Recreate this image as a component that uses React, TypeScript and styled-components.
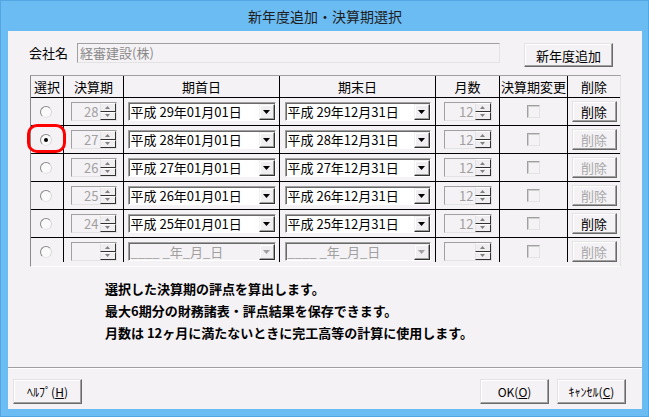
import React from 'react';
import styled, { createGlobalStyle } from 'styled-components';

const FONT = `"Noto Sans CJK JP", "Noto Sans", sans-serif`;

const GlobalStyle = createGlobalStyle`
  html, body {
    margin: 0;
    padding: 0;
  }
  body {
    font-family: ${FONT};
  }
  * {
    box-sizing: border-box;
  }
`;

interface PeriodRow {
  no: string;
  start: string;
  end: string;
  months: string;
  selected: boolean;
  deletable: boolean;
  empty?: boolean;
}

const rows: PeriodRow[] = [
  { no: '28', start: '平成 29年01月01日', end: '平成 29年12月31日', months: '12', selected: false, deletable: true },
  { no: '27', start: '平成 28年01月01日', end: '平成 28年12月31日', months: '12', selected: true, deletable: false },
  { no: '26', start: '平成 27年01月01日', end: '平成 27年12月31日', months: '12', selected: false, deletable: false },
  { no: '25', start: '平成 26年01月01日', end: '平成 26年12月31日', months: '12', selected: false, deletable: false },
  { no: '24', start: '平成 25年01月01日', end: '平成 25年12月31日', months: '12', selected: false, deletable: true },
  { no: '', start: '____ _年_月_日', end: '____ _年_月_日', months: '', selected: false, deletable: false, empty: true }
];

const headers = ['選択', '決算期', '期首日', '期末日', '月数', '決算期変更', '削除'];

// Window frame
const Window = styled.div`
  width: 649px;
  height: 417px;
  background: #6cbcf4;
  border: 1px solid #52a6e2;
  padding: 0 6px 7px 7px;
  display: flex;
  flex-direction: column;
`;

const TitleBar = styled.div`
  height: 30px;
  line-height: 30px;
  text-align: center;
  font-size: 14px;
  color: #1e1e1e;
`;

const Client = styled.div`
  flex: 1;
  background: #f5f2f5;
  display: flex;
  flex-direction: column;
`;

const CompanyRow = styled.div`
  display: flex;
  align-items: flex-start;
  padding: 12px 0 0 21px;
`;

const Label = styled.div`
  width: 48px;
  height: 20px;
  line-height: 20px;
  font-size: 13px;
  color: #000;
`;

const TextBox = styled.div`
  width: 423px;
  height: 20px;
  margin-right: 24px;
  border: 1px solid;
  border-color: #a0a0a0 #e3e3e3 #e3e3e3 #a0a0a0;
  padding-left: 2px;
  font-size: 13px;
  line-height: 18px;
  color: #8a8a8a;
`;

const RaisedButton = styled.div<{ $w: number; $h: number; $disabled?: boolean; $size?: number }>`
  width: ${p => p.$w}px;
  height: ${p => p.$h}px;
  border: 1px solid;
  border-color: #e3e3e3 #696969 #696969 #e3e3e3;
  box-shadow: inset -1px -1px 0 #a0a0a0, inset 1px 1px 0 #fff;
  background: #f5f2f5;
  display: flex;
  align-items: center;
  justify-content: center;
  font-size: ${p => p.$size ?? 13}px;
  line-height: 1;
  color: ${p => (p.$disabled ? '#a8a8a8' : '#000')};
  white-space: nowrap;
`;

// Grid
const Frame = styled.div`
  margin: 8px 0 0 22px;
  width: 591px;
  height: 192px;
  border: 1px solid;
  border-color: #a0a0a0 #e3e3e3 #fff #8a8a8a;
`;

const Grid = styled.div`
  display: grid;
  grid-template-columns: 33px 60px 156px 156px 64px 68px 52px;
  grid-template-rows: 22px repeat(5, 28px) 24px;
`;

const HeadCell = styled.div<{ $last?: boolean }>`
  border-right: ${p => (p.$last ? 'none' : '1px solid #000')};
  border-bottom: 1px solid #000;
  font-size: 13px;
  line-height: 21px;
  text-align: center;
  color: #000;
  white-space: nowrap;
  overflow: hidden;
`;

const Cell = styled.div<{ $last?: boolean; $bottom?: boolean }>`
  position: relative;
  border-right: ${p => (p.$last ? 'none' : '1px solid #000')};
  border-bottom: ${p => (p.$bottom ? 'none' : '1px solid #000')};
`;

const CellInner = styled.div`
  height: 27px;
  display: flex;
  align-items: center;
  justify-content: center;
`;

const Radio = styled.div<{ $checked: boolean }>`
  width: 12px;
  height: 12px;
  margin-right: 3px;
  margin-top: 1px;
  border-radius: 50%;
  border: 1px solid;
  border-color: #8a8a8a #d8d8d8 #e6e6e6 #8a8a8a;
  background: #fbfafb;
  display: flex;
  align-items: center;
  justify-content: center;

  &::after {
    content: '';
    display: ${p => (p.$checked ? 'block' : 'none')};
    width: 4px;
    height: 4px;
    border-radius: 50%;
    background: #000;
  }
`;

const Marker = styled.div`
  position: absolute;
  left: -4px;
  top: -2px;
  width: 39px;
  height: 29px;
  border: 3px solid #f00;
  border-radius: 10px;
`;

const Spin = styled.div<{ $w: number }>`
  width: ${p => p.$w}px;
  height: 19px;
  display: flex;
  border: 1px solid;
  border-color: #a0a0a0 #e3e3e3 #e3e3e3 #a0a0a0;
  background: #f5f2f5;
`;

const SpinText = styled.div`
  flex: 1;
  font-size: 13px;
  line-height: 17px;
  text-align: right;
  padding-right: 1px;
  color: #a0a0a0;
`;

const SpinButtons = styled.div`
  width: 16px;
  display: flex;
  flex-direction: column;
`;

const SpinHalf = styled.div`
  flex: 1;
  border: 1px solid;
  border-color: #fff #303030 #303030 #e3e3e3;
  background: #f0eef0;
  display: flex;
  align-items: center;
  justify-content: center;
`;

const Combo = styled.div<{ $w: number; $disabled?: boolean }>`
  width: ${p => p.$w}px;
  height: 19px;
  display: flex;
  border: 1px solid;
  border-color: #a0a0a0 #fff #fff #a0a0a0;
  box-shadow: inset 1px 1px 0 #696969;
  background: ${p => (p.$disabled ? '#f5f2f5' : '#fff')};
`;

const ComboText = styled.div<{ $disabled?: boolean }>`
  flex: 1;
  padding: 1px 0 0 2px;
  font-size: 13px;
  line-height: 16px;
  color: ${p => (p.$disabled ? '#a0a0a0' : '#000')};
  white-space: nowrap;
  overflow: hidden;
`;

const ComboButton = styled.div`
  width: 16px;
  margin: 1px 0 0 0;
  border: 1px solid;
  border-color: #f0f0f0 #303030 #303030 #f0f0f0;
  box-shadow: inset -1px -1px 0 #a0a0a0, inset 1px 1px 0 #fff;
  background: #f0eef0;
  display: flex;
  align-items: center;
  justify-content: center;
`;

const Check = styled.div`
  width: 13px;
  height: 13px;
  border: 1px solid;
  border-color: #a0a0a0 #e3e3e3 #e3e3e3 #a0a0a0;
  box-shadow: inset 1px 1px 0 #d0d0d0;
  background: #f5f2f5;
`;

// Notes + footer
const Notes = styled.div`
  margin: 11px 0 0 97px;
  font-size: 13px;
  font-weight: 700;
  line-height: 22px;
  color: #000;
`;

const Footer = styled.div`
  margin-top: auto;
  border-top: 1px solid #a0a0a0;
  box-shadow: inset 0 1px 0 #fff;
  padding: 11px 16px 5px 5px;
  display: flex;
  align-items: center;
  gap: 8px;
`;

const Spacer = styled.div`
  flex: 1;
`;

const Key = styled.span`
  text-decoration: underline;
`;

const Arrow = ({ dir, color }: { dir: 'up' | 'down'; color: string }) => (
  <svg width="5" height="3" viewBox="0 0 5 3">
    <path d={dir === 'up' ? 'M2.5 0L5 3H0z' : 'M0 0h5L2.5 3z'} fill={color} />
  </svg>
);

const DropArrow = ({ color }: { color: string }) => (
  <svg width="7" height="4" viewBox="0 0 7 4">
    <path d="M0 0h7L3.5 4z" fill={color} />
  </svg>
);

const SpinBox = ({ value, w }: { value: string; w: number }) => (
  <Spin $w={w}>
    <SpinText>{value}</SpinText>
    <SpinButtons>
      <SpinHalf><Arrow dir="up" color="#808080" /></SpinHalf>
      <SpinHalf><Arrow dir="down" color="#808080" /></SpinHalf>
    </SpinButtons>
  </Spin>
);

const DateCombo = ({ value, w, disabled }: { value: string; w: number; disabled?: boolean }) => (
  <Combo $w={w} $disabled={disabled}>
    <ComboText $disabled={disabled}>{value}</ComboText>
    <ComboButton>
      <DropArrow color={disabled ? '#a0a0a0' : '#000'} />
    </ComboButton>
  </Combo>
);

export default function App() {
  return (
    <>
      <GlobalStyle />
      <Window>
        <TitleBar>新年度追加・決算期選択</TitleBar>
        <Client>
          <CompanyRow>
            <Label>会社名</Label>
            <TextBox>経審建設(株)</TextBox>
            <RaisedButton $w={89} $h={24}>新年度追加</RaisedButton>
          </CompanyRow>

          <Frame>
            <Grid>
              {headers.map((h, i) => (
                <HeadCell key={h} $last={i === headers.length - 1}>{h}</HeadCell>
              ))}
              {rows.map((r, i) => {
                const bottom = i === rows.length - 1;
                return (
                  <React.Fragment key={i}>
                    <Cell $bottom={bottom}>
                      <CellInner>
                        <Radio $checked={r.selected} />
                      </CellInner>
                      {r.selected && <Marker />}
                    </Cell>
                    <Cell $bottom={bottom}>
                      <CellInner>
                        <SpinBox value={r.no} w={46} />
                      </CellInner>
                    </Cell>
                    <Cell $bottom={bottom}>
                      <CellInner>
                        <DateCombo value={r.start} w={148} disabled={r.empty} />
                      </CellInner>
                    </Cell>
                    <Cell $bottom={bottom}>
                      <CellInner>
                        <DateCombo value={r.end} w={146} disabled={r.empty} />
                      </CellInner>
                    </Cell>
                    <Cell $bottom={bottom}>
                      <CellInner>
                        <SpinBox value={r.months} w={48} />
                      </CellInner>
                    </Cell>
                    <Cell $bottom={bottom}>
                      <CellInner>
                        <Check />
                      </CellInner>
                    </Cell>
                    <Cell $bottom={bottom} $last>
                      <CellInner>
                        <RaisedButton $w={45} $h={21} $disabled={!r.deletable}>削除</RaisedButton>
                      </CellInner>
                    </Cell>
                  </React.Fragment>
                );
              })}
            </Grid>
          </Frame>

          <Notes>
            <div>選択した決算期の評点を算出します。</div>
            <div>最大6期分の財務諸表・評点結果を保存できます。</div>
            <div>月数は 12ヶ月に満たないときに完工高等の計算に使用します。</div>
          </Notes>

          <Footer>
            <RaisedButton $w={69} $h={25} $size={12}>ﾍﾙﾌﾟ(<Key>H</Key>)</RaisedButton>
            <Spacer />
            <RaisedButton $w={69} $h={25} $size={12}>OK(<Key>O</Key>)</RaisedButton>
            <RaisedButton $w={69} $h={25} $size={12}>ｷｬﾝｾﾙ(<Key>C</Key>)</RaisedButton>
          </Footer>
        </Client>
      </Window>
    </>
  );
}
